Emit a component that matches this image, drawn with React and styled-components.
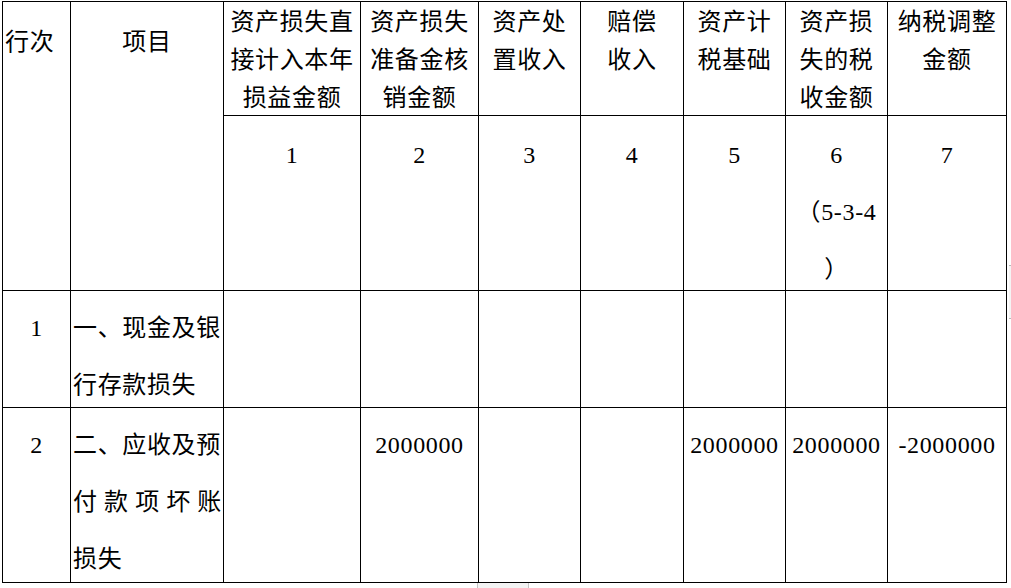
import React from "react";
import styled, { createGlobalStyle } from "styled-components";

const GlobalStyle = createGlobalStyle`
  html, body {
    margin: 0;
    padding: 0;
    background: #ffffff;
  }
  body {
    font-family: "Liberation Serif", "Noto Sans CJK SC", serif;
    color: #000000;
  }
`;

const Page = styled.div`
  position: relative;
  width: 1011px;
  height: 588px;
  padding: 1px 0 0 2px;
  box-sizing: border-box;
  overflow: hidden;
`;

const Sheet = styled.table`
  border-collapse: collapse;
  table-layout: fixed;
  width: 1004px;
  font-size: 24px;
  letter-spacing: 0.65px;
`;

const Row = styled.tr`
  height: ${(p) => p.$h}px;
`;

const Cell = styled.td`
  border: 1px solid #000000;
  padding: 0 1px 0 ${(p) => (p.$left ? 2 : 1)}px;
  vertical-align: top;
  text-align: ${(p) => (p.$left ? "left" : "center")};
  line-height: ${(p) => p.$lh || 57}px;
  font-weight: normal;
  white-space: nowrap;
`;

/* lines hang from the top of the cell without growing the row */
const Content = styled.div`
  height: 0;
  overflow: visible;
  padding-top: ${(p) => p.$top || 0}px;
`;

const Line = styled.span`
  display: block;
  text-align-last: ${(p) => (p.$justify ? "justify" : "auto")};
`;

const HandleBottom = styled.div`
  position: absolute;
  left: 477px;
  top: 583px;
  width: 50px;
  height: 6px;
  background: #f3f3f3;
  border-left: 1px solid #c4c4c4;
  border-right: 1px solid #c4c4c4;
`;

const HandleSide = styled.div`
  position: absolute;
  left: 1009px;
  top: 265px;
  width: 2px;
  height: 52px;
  background: #f4f4f4;
  border-top: 1px solid #b8b8b8;
  border-bottom: 1px solid #b8b8b8;
`;

const widths = [68, 153, 137, 118, 102, 103, 102, 102, 119];

const heads = [
  ["资产损失直", "接计入本年", "损益金额"],
  ["资产损失", "准备金核", "销金额"],
  ["资产处", "置收入"],
  ["赔偿", "收入"],
  ["资产计", "税基础"],
  ["资产损", "失的税", "收金额"],
  ["纳税调整", "金额"],
];

const numbers = [["1"], ["2"], ["3"], ["4"], ["5"], ["6", "（5-3-4", "）"], ["7"]];

const rows = [
  {
    no: "1",
    height: 117,
    item: [{ t: "一、现金及银" }, { t: "行存款损失" }],
    values: ["", "", "", "", "", "", ""],
  },
  {
    no: "2",
    height: 175,
    item: [{ t: "二、应收及预" }, { t: "付款项坏账", justify: true }, { t: "损失" }],
    values: ["", "2000000", "", "", "2000000", "2000000", "-2000000"],
  },
];

const App = () => {
  return (
    <>
      <GlobalStyle />
      <Page>
        <Sheet>
          <colgroup>
            {widths.map((w, i) => (
              <col key={i} style={{ width: w }} />
            ))}
          </colgroup>
          <tbody>
            <Row $h={114}>
              <Cell as="th" rowSpan={2} $left $lh={38}>
                <Content $top={21}>行次</Content>
              </Cell>
              <Cell as="th" rowSpan={2} $lh={38}>
                <Content $top={21}>项目</Content>
              </Cell>
              {heads.map((lines, i) => (
                <Cell as="th" key={i} $lh={38}>
                  <Content $top={1}>
                    {lines.map((l) => (
                      <Line key={l}>{l}</Line>
                    ))}
                  </Content>
                </Cell>
              ))}
            </Row>
            <Row $h={175}>
              {numbers.map((lines, i) => (
                <Cell key={i}>
                  <Content $top={11}>
                    {lines.map((l) => (
                      <Line key={l}>{l}</Line>
                    ))}
                  </Content>
                </Cell>
              ))}
            </Row>
            {rows.map((r) => (
              <Row key={r.no} $h={r.height}>
                <Cell>
                  <Content $top={9}>{r.no}</Content>
                </Cell>
                <Cell $left>
                  <Content $top={9}>
                    {r.item.map((l) => (
                      <Line key={l.t} $justify={l.justify}>
                        {l.t}
                      </Line>
                    ))}
                  </Content>
                </Cell>
                {r.values.map((v, i) => (
                  <Cell key={i}>
                    <Content $top={9}>{v}</Content>
                  </Cell>
                ))}
              </Row>
            ))}
          </tbody>
        </Sheet>
        <HandleBottom />
        <HandleSide />
      </Page>
    </>
  );
};

export default App;
